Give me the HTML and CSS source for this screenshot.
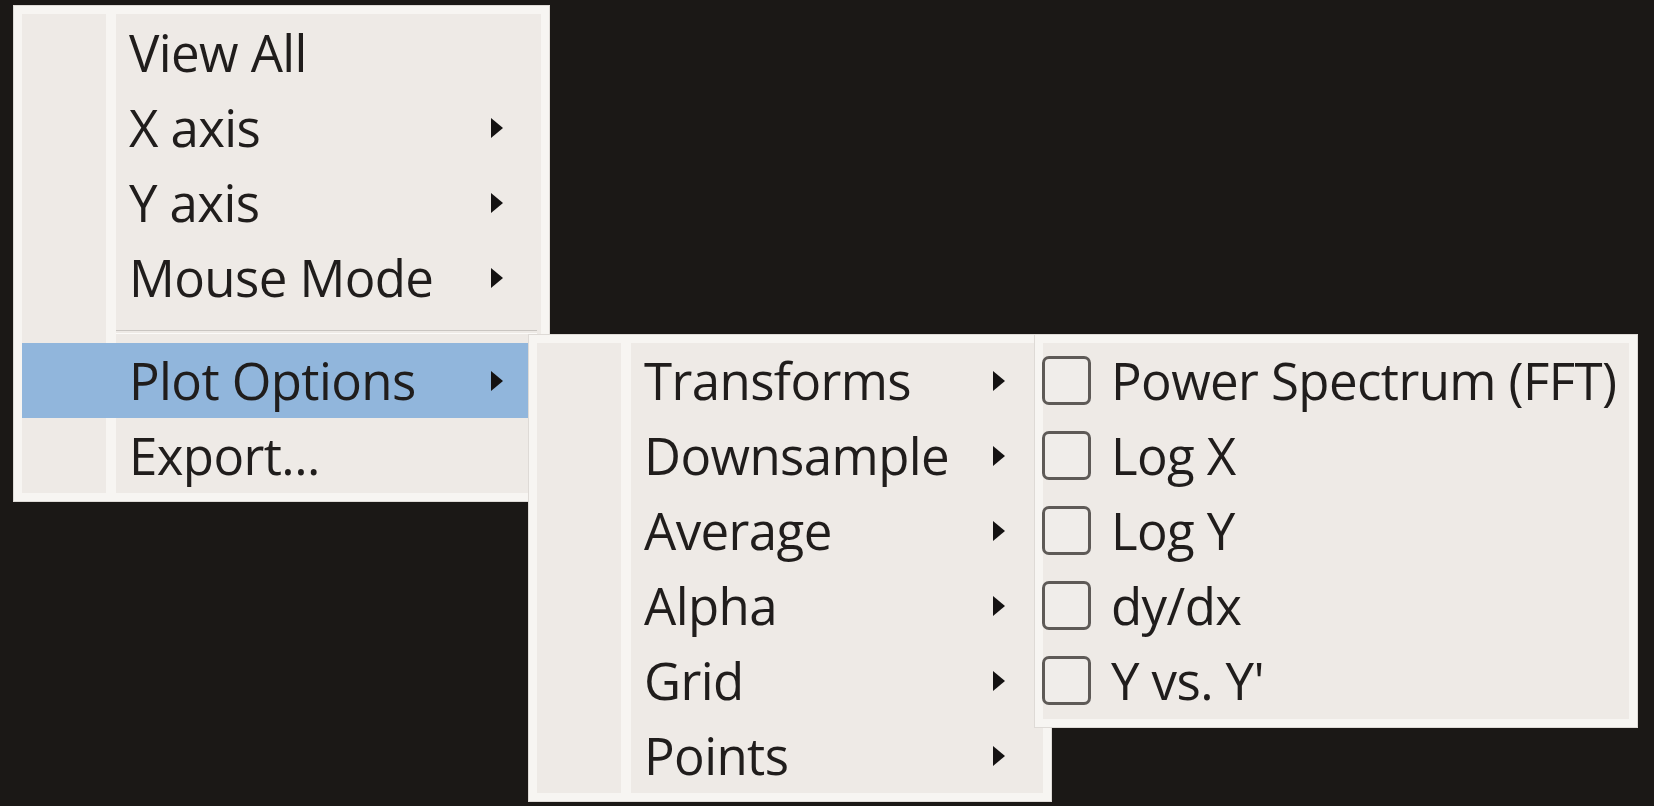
FILE: index.html
```html
<!DOCTYPE html>
<html lang="en">
<head>
<meta charset="utf-8">
<title>Plot context menu</title>
<link rel="stylesheet" href="styles.css">
</head>
<body>
<div class="desk">
  <div class="menu menu-main">
    <div class="menu-body">
      <div class="item"><span class="label">View All</span></div>
      <div class="item"><span class="label">X axis</span><svg class="arrow" viewBox="0 0 12 20"><polygon points="0,0 12,10 0,20"/></svg></div>
      <div class="item"><span class="label">Y axis</span><svg class="arrow" viewBox="0 0 12 20"><polygon points="0,0 12,10 0,20"/></svg></div>
      <div class="item"><span class="label">Mouse Mode</span><svg class="arrow" viewBox="0 0 12 20"><polygon points="0,0 12,10 0,20"/></svg></div>
      <div class="separator"></div>
      <div class="item active"><span class="label">Plot Options</span><svg class="arrow" viewBox="0 0 12 20"><polygon points="0,0 12,10 0,20"/></svg></div>
      <div class="item"><span class="label">Export...</span></div>
    </div>
  </div>

  <div class="menu menu-plot">
    <div class="menu-body">
      <div class="item"><span class="label">Transforms</span><svg class="arrow" viewBox="0 0 12 20"><polygon points="0,0 12,10 0,20"/></svg></div>
      <div class="item"><span class="label">Downsample</span><svg class="arrow" viewBox="0 0 12 20"><polygon points="0,0 12,10 0,20"/></svg></div>
      <div class="item"><span class="label">Average</span><svg class="arrow" viewBox="0 0 12 20"><polygon points="0,0 12,10 0,20"/></svg></div>
      <div class="item"><span class="label">Alpha</span><svg class="arrow" viewBox="0 0 12 20"><polygon points="0,0 12,10 0,20"/></svg></div>
      <div class="item"><span class="label">Grid</span><svg class="arrow" viewBox="0 0 12 20"><polygon points="0,0 12,10 0,20"/></svg></div>
      <div class="item"><span class="label">Points</span><svg class="arrow" viewBox="0 0 12 20"><polygon points="0,0 12,10 0,20"/></svg></div>
    </div>
  </div>

  <div class="menu menu-transforms">
    <div class="menu-body check-body">
      <div class="check-item"><span class="box"></span><span class="label">Power Spectrum (FFT)</span></div>
      <div class="check-item"><span class="box"></span><span class="label">Log X</span></div>
      <div class="check-item"><span class="box"></span><span class="label">Log Y</span></div>
      <div class="check-item"><span class="box"></span><span class="label">dy/dx</span></div>
      <div class="check-item"><span class="box"></span><span class="label">Y vs. Y'</span></div>
    </div>
  </div>
</div>
</body>
</html>
```

FILE: styles.css
```css
* { box-sizing: border-box; }

html, body {
  margin: 0;
  padding: 0;
  background: #1b1816;
}

body {
  width: 1654px;
  height: 806px;
  overflow: hidden;
  font-family: "Open Sans", "Noto Sans", "DejaVu Sans", sans-serif;
  font-size: 51px;
  letter-spacing: -0.6px;
  color: #201d1c;
}

.desk {
  position: relative;
  width: 1654px;
  height: 806px;
}

.menu {
  position: absolute;
  background: #f7f5f2;
  border: 1px solid #dedad6;
  padding: 8px;
}

.menu-main {
  left: 13px;
  top: 5px;
  width: 537px;
  height: 497px;
  z-index: 1;
}

.menu-plot {
  left: 528px;
  top: 334px;
  width: 524px;
  height: 468px;
  z-index: 2;
}

.menu-transforms {
  left: 1034px;
  top: 334px;
  width: 604px;
  height: 394px;
  z-index: 3;
}

.menu-body {
  height: 100%;
  display: flex;
  flex-direction: column;
  background: linear-gradient(to right,
    #eeeae6 0, #eeeae6 84px,
    #f7f5f2 84px, #f7f5f2 94px,
    #eeeae6 94px);
}

.menu-main .menu-body {
  padding-top: 1px;
}

.item {
  height: 75px;
  flex: none;
  display: flex;
  align-items: center;
  padding-left: 107px;
  padding-right: 38px;
  line-height: 75px;
  white-space: nowrap;
}

.item .label {
  flex: 1;
}

.item.active {
  background: #91b6dc;
}

.arrow {
  width: 12px;
  height: 20px;
  flex: none;
  fill: #141212;
}

.separator {
  height: 28px;
  flex: none;
  margin-left: 94px;
  margin-right: 4px;
  padding-top: 15px;
}

.separator::before {
  content: "";
  display: block;
  height: 2px;
  border-top: 1px solid #c9c5c1;
  border-bottom: 1px solid #fbfaf8;
}

.check-body {
  background: #eeeae6;
}

.check-item {
  height: 75px;
  flex: none;
  display: flex;
  align-items: center;
  gap: 20px;
  line-height: 75px;
  white-space: nowrap;
}

.box {
  width: 49px;
  height: 49px;
  flex: none;
  margin-left: -1px;
  border: 3px solid #5e5a57;
  border-radius: 7px;
  background: #f0edea;
}
```
